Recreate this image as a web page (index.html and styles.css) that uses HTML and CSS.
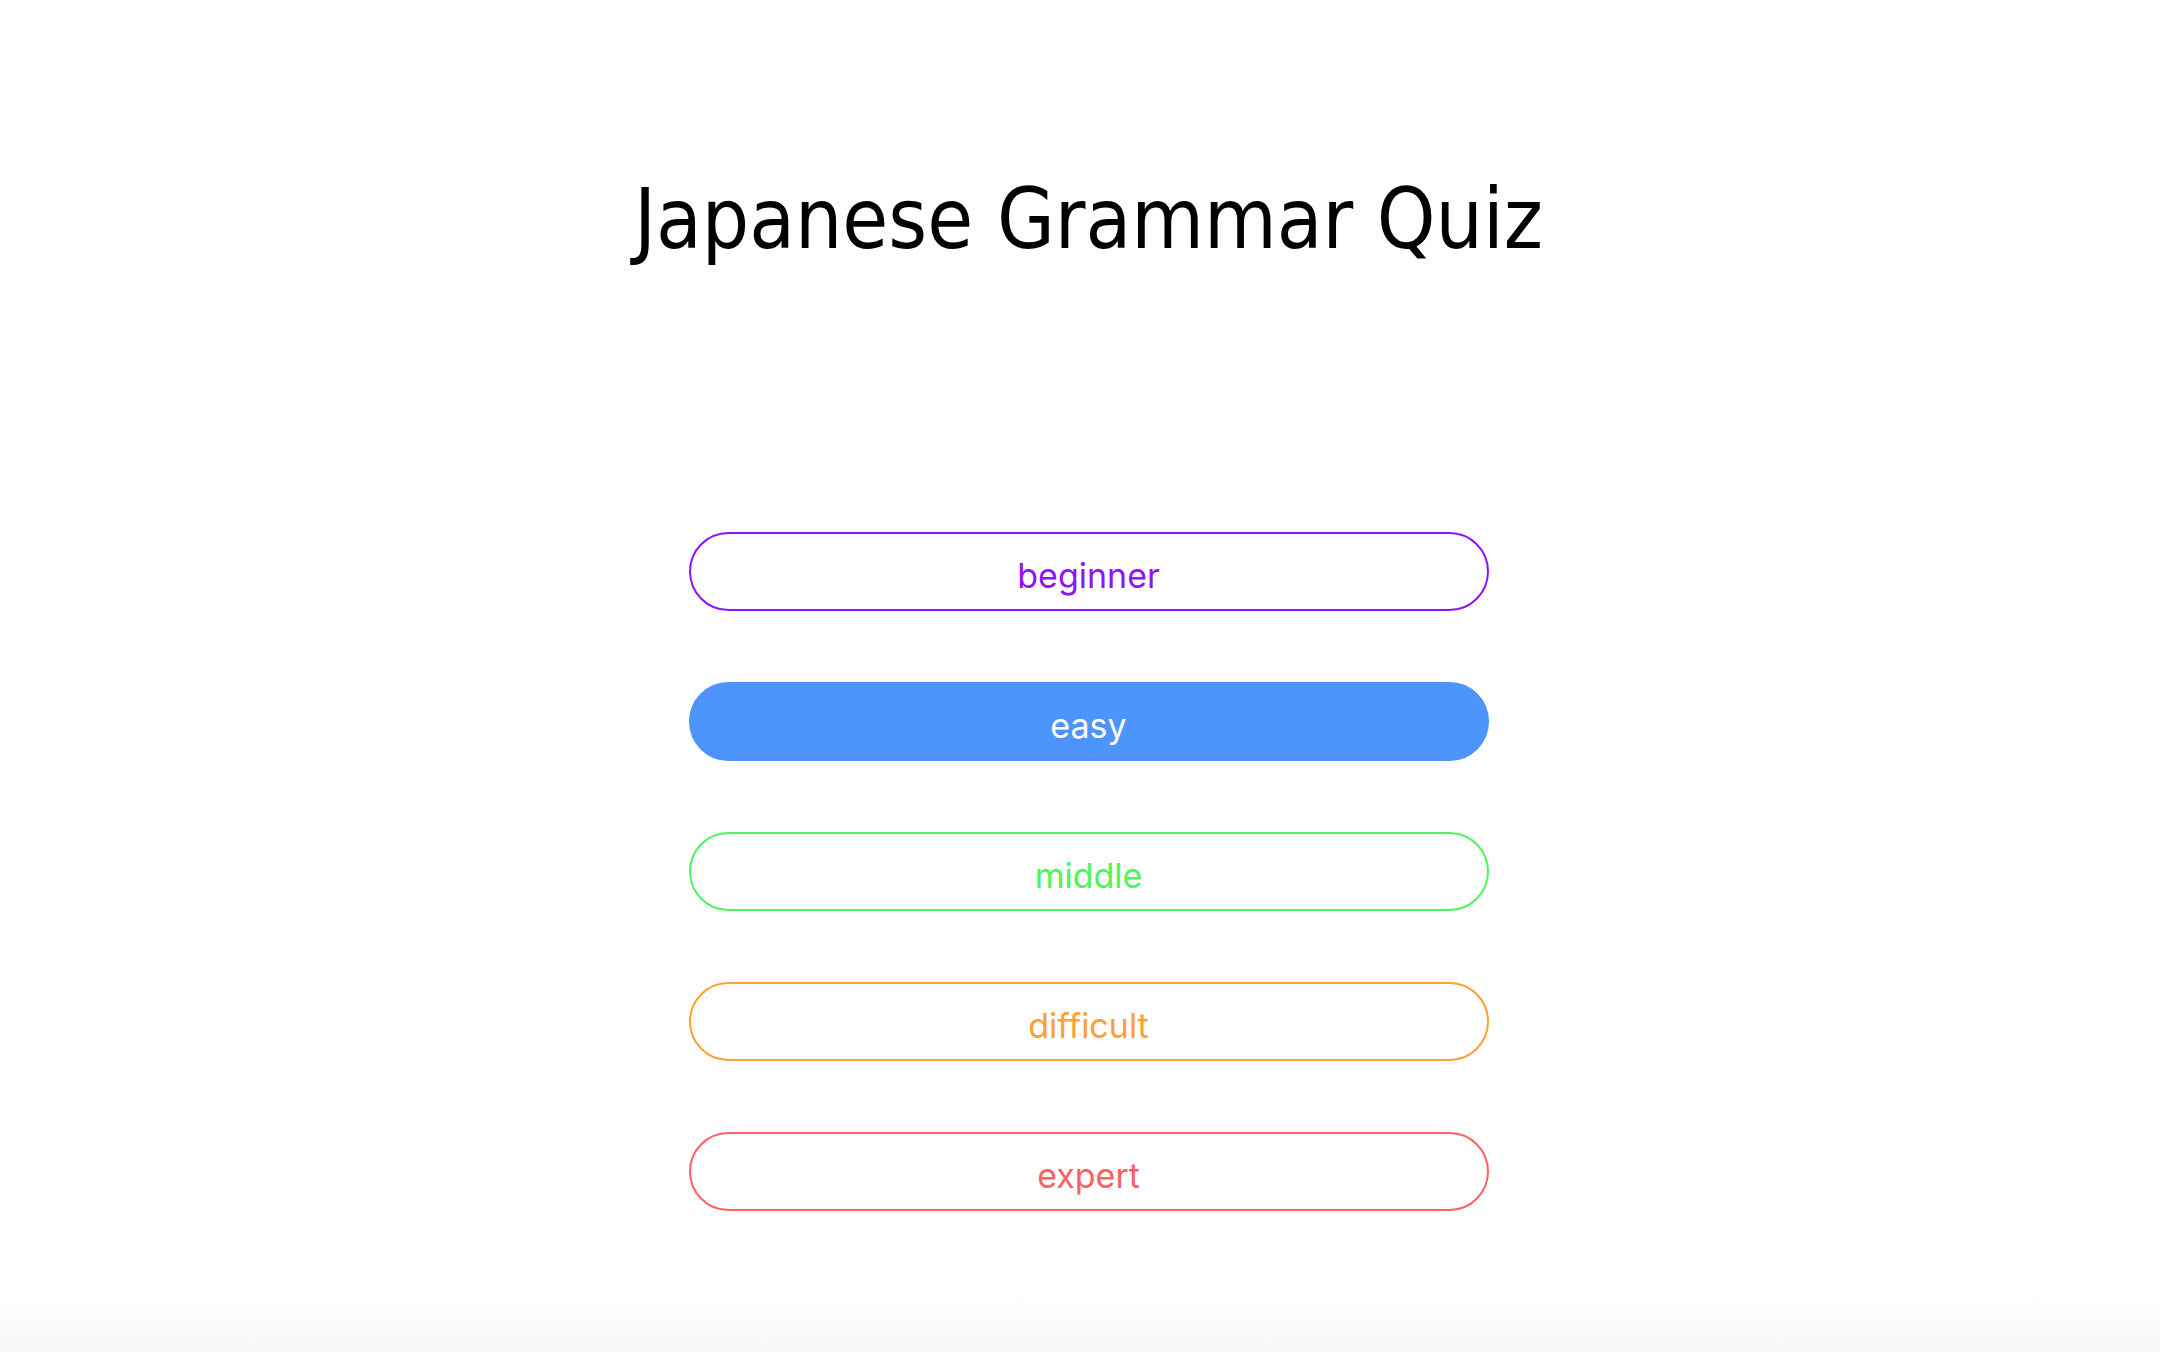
FILE: index.html
```html
<!DOCTYPE html>
<html lang="en">
<head>
<meta charset="utf-8">
<title>Japanese Grammar Quiz</title>
<link rel="stylesheet" href="styles.css">
</head>
<body>
<main class="page">
  <h1 class="title">Japanese Grammar Quiz</h1>
  <div class="levels">
    <button class="level level-beginner">beginner</button>
    <button class="level level-easy">easy</button>
    <button class="level level-middle">middle</button>
    <button class="level level-difficult">difficult</button>
    <button class="level level-expert">expert</button>
  </div>
</main>
</body>
</html>
```
FILE: styles.css
```css
html, body {
  margin: 0;
  padding: 0;
}
body {
  min-height: 100vh;
  background: linear-gradient(to bottom, #ffffff 0, #ffffff calc(100% - 60px), #f8f8f8 100%);
}
.page {
  display: flex;
  flex-direction: column;
  align-items: center;
  padding-top: 160px;
  padding-left: 17px;
}
.title {
  margin: 0;
  font-family: "DejaVu Sans Condensed", "DejaVu Sans", sans-serif;
  font-weight: normal;
  font-size: 83px;
  line-height: 120px;
  color: #000;
}
.levels {
  margin-top: 252px;
  width: 800px;
  display: flex;
  flex-direction: column;
  gap: 71px;
}
.level {
  height: 79px;
  border-radius: 40px;
  border: 2px solid currentColor;
  background: #fff;
  font-family: Inter, "Liberation Sans", Arial, sans-serif;
  font-size: 34px;
  padding: 8px 0 0;
  cursor: pointer;
}
.level-beginner { color: #9012fe; }
.level-easy { color: #fff; background: #4d94fc; border-color: #4d94fc; }
.level-middle { color: #4cf55c; }
.level-difficult { color: #ffa032; }
.level-expert { color: #ff6064; }
```
